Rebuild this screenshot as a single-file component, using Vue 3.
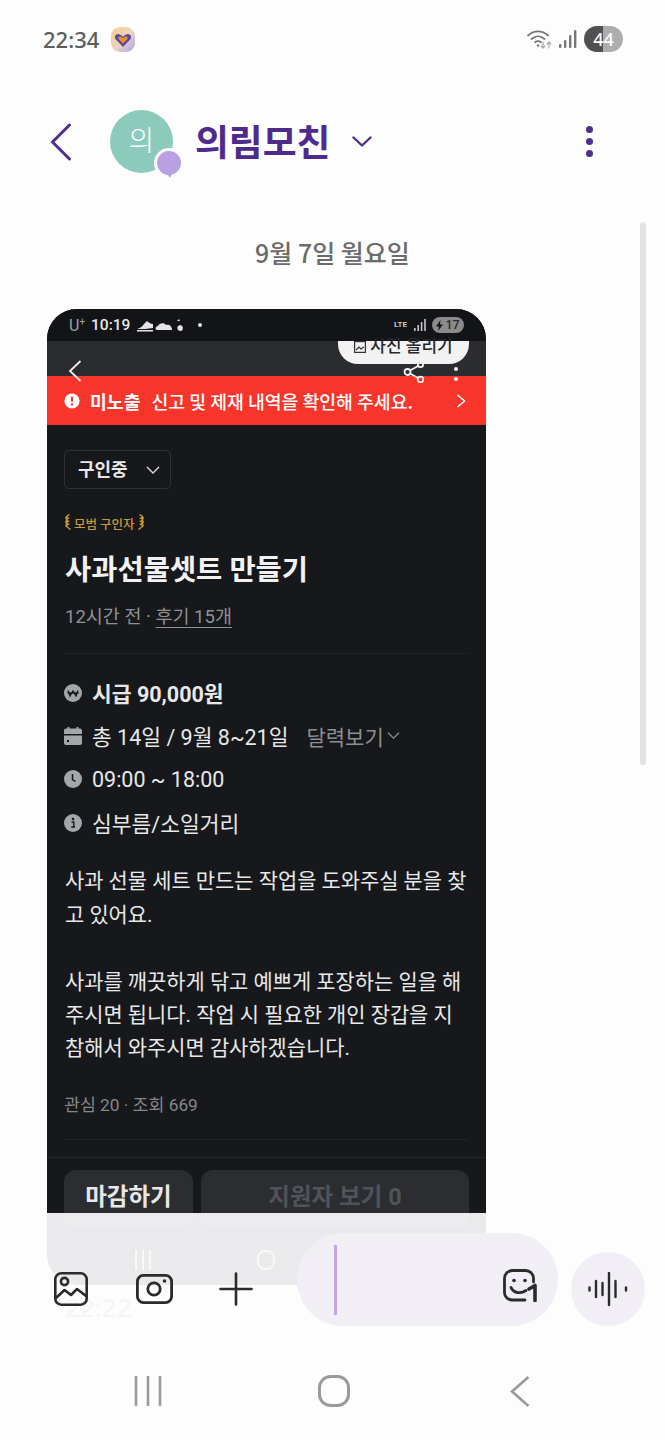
<template>
  <div class="phone">
    <div class="status">
      <span class="clock">22:34</span>
      <svg class="app-badge" width="24" height="25" viewBox="0 0 24 25">
        <defs>
          <linearGradient id="badgeGrad" x1="0" y1="0" x2="1" y2="1">
            <stop offset="0" stop-color="#f8cf85" />
            <stop offset="0.55" stop-color="#e9d3c4" />
            <stop offset="1" stop-color="#a99cf0" />
          </linearGradient>
        </defs>
        <rect width="24" height="25" rx="9" fill="url(#badgeGrad)" />
        <path d="M12 20 4.8 12.6C2.6 9.8 5 6.4 8 7.2c1.800.4 3 1.500 4 2.800 1-1.300 2.200-2.400 4-2.800 3-.8 5.400 2.600 3.200 5.400Z" fill="#5a4a9a" />
        <path d="M12 16.500 7.800 12.200c-1.200-1.500.2-3 1.700-2.600 1 .3 1.800 1.100 2.500 2 .7-.9 1.500-1.700 2.500-2 1.500-.4 2.900 1.100 1.700 2.600Z" fill="#f0902c" />
      </svg>
      <div class="status-right">
        <svg width="26" height="20" viewBox="0 0 26 20" fill="none" stroke="#777" stroke-linecap="round">
          <path d="M1 6.500C7 1 15 1 21 6.500" stroke-width="1.800" />
          <path d="M4.500 10c4-3.500 9-3.500 13 0" stroke-width="1.800" />
          <path d="M8 13.300c2-1.600 4-1.600 6 0" stroke-width="1.800" />
          <circle cx="11" cy="16.500" r="1.200" fill="#777" stroke="none" />
          <path d="M16 13v6M14.300 17l1.700 2 1.700-2" stroke="#aaa" stroke-width="1.200" />
          <path d="M22 19v-6M20.300 15l1.700-2 1.700 2" stroke="#aaa" stroke-width="1.200" />
        </svg>
        <svg class="signal" width="18" height="18" viewBox="0 0 18 18" fill="#777">
          <rect x="0" y="14" width="2.400" height="4" rx="1" />
          <rect x="5" y="10" width="2.400" height="8" rx="1" />
          <rect x="10" y="5" width="2.400" height="13" rx="1" />
          <rect x="15" y="0" width="2.400" height="18" rx="1" />
        </svg>
        <div class="battery"><span>44</span></div>
      </div>
    </div>

    <header class="header">
      <svg class="back" width="22" height="38" viewBox="0 0 22 38" fill="none" stroke="#4f2d8a" stroke-width="3" stroke-linecap="round" stroke-linejoin="round">
        <path d="M19.500 2 2.500 19l17 17" />
      </svg>
      <div class="avatar">
        <span>의</span>
        <svg class="avatar-tag" width="30" height="34" viewBox="0 0 30 34">
          <path d="M15 1.500C7.500 1.500 1.500 7.500 1.500 15c0 7 5 12.500 11.500 13.400L16 33l2.500-5C24 26.500 28.500 21.500 28.500 15 28.500 7.500 22.500 1.500 15 1.500Z" fill="#b9a0e2" stroke="#fdfdfe" stroke-width="3" />
        </svg>
      </div>
      <h1 class="room">의림모친</h1>
      <svg class="room-caret" width="20" height="11" viewBox="0 0 20 11" fill="none" stroke="#4f2d8a" stroke-width="2.400" stroke-linecap="round" stroke-linejoin="round">
        <path d="M1.500 1.500 10 9.500l8.500-8" />
      </svg>
      <div class="kebab"><i></i><i></i><i></i></div>
    </header>

    <div class="date">9월 7일 월요일</div>

    <main class="thread">
      <article class="shot">
        <div class="shot-status">
          <span class="carrier">U<sup>+</sup></span>
          <b>10:19</b>
          <svg width="46" height="14" viewBox="0 0 46 14" fill="#e6e6e6">
            <path d="M0 11c3-1 5-2 7-5l3-3c2 2 4 3 6 3v4c-5 1-10 1-16 1Z" />
            <rect y="12" width="16" height="1.500" />
            <path d="M20 12c-2 0-2-4 1-4 1-3 6-4 8-1 3-1 6 1 6 5Z" />
            <path d="M43 3h-3l2-2M44 13c-3 0-4-2-3.500-4 .5-2 4-2.500 5-.5s-.5 4.500-1.500 4.500Z" />
          </svg>
          <i class="shot-dot"></i>
          <div class="shot-status-right">
            <span class="lte">LTE</span>
            <svg width="12" height="12" viewBox="0 0 12 12" fill="#c8c8c8">
              <rect x="0" y="9" width="1.600" height="3" />
              <rect x="3.400" y="6" width="1.600" height="6" />
              <rect x="6.800" y="3" width="1.600" height="9" />
              <rect x="10.200" y="0" width="1.600" height="12" />
            </svg>
            <div class="shot-battery"><svg width="7" height="11" viewBox="0 0 7 11" fill="#15161a"><path d="M4.500 0 0 6.500h3L2 11l5-6.500H4Z" /></svg>17</div>
          </div>
        </div>

        <div class="shot-topbar">
          <svg class="shot-back" width="14" height="22" viewBox="0 0 14 22" fill="none" stroke="#eee" stroke-width="1.800">
            <path d="M12.500 1 2 11l10.500 10" />
          </svg>
          <div class="upload">
            <svg width="12" height="12" viewBox="0 0 12 12" fill="none" stroke="#333" stroke-width="1.200"><rect x=".6" y=".6" width="10.800" height="10.800" /><path d="m2 9 3-3 2 2 3-2" /></svg>
            사진 올리기
          </div>
          <svg class="shot-share" width="22" height="22" viewBox="0 0 22 22" fill="none" stroke="#f2f2f2" stroke-width="1.800">
            <circle cx="4.500" cy="11" r="3" />
            <circle cx="17.500" cy="3.500" r="2.600" />
            <circle cx="17.500" cy="18.500" r="2.800" />
            <path d="m7 9.500 8-4.500M7 12.500l8 4.500" />
          </svg>
          <div class="shot-kebab"><i></i><i></i></div>
        </div>

        <div class="notice">
          <svg width="16" height="16" viewBox="0 0 16 16">
            <circle cx="8" cy="8" r="7.600" fill="#fff" />
            <rect x="7" y="3.500" width="2" height="5.600" rx="1" fill="#f8352a" />
            <circle cx="8" cy="11.400" r="1.200" fill="#f8352a" />
          </svg>
          <b>미노출</b>
          <span>신고 및 제재 내역을 확인해 주세요.</span>
          <svg class="notice-go" width="10" height="14" viewBox="0 0 10 14" fill="none" stroke="#fff" stroke-width="1.500">
            <path d="m1.500 1 7 6-7 6" />
          </svg>
        </div>

        <div class="shot-body">
          <div class="state">
            <span>구인중</span>
            <svg width="14" height="8" viewBox="0 0 14 8" fill="none" stroke="#ddd" stroke-width="1.400"><path d="m1 1 6 6 6-6" /></svg>
          </div>

          <div class="medal">
            <svg width="8" height="18" viewBox="0 0 8 18" fill="#c79a3a"><path d="M6 1 3 3l3 1-3 2 3 1-3 2 3 1-3 2 4 3-1 1-5-4 1-2-1-2 1-2-1-2 1-2 3-2Z" /></svg>
            <span>모범 구인자</span>
            <svg width="8" height="18" viewBox="0 0 8 18" fill="#c79a3a"><path d="M2 1l3 2-3 1 3 2-3 1 3 2-3 1 3 2-4 3 1 1 5-4-1-2 1-2-1-2 1-2-1-2-3-2Z" /></svg>
          </div>

          <h2 class="job">사과선물셋트 만들기</h2>
          <p class="meta">12시간 전 · <u>후기 15개</u></p>
          <hr class="rule rule-a" />

          <ul class="facts">
            <li class="strong">
              <svg width="18" height="18" viewBox="0 0 18 18">
                <circle cx="9" cy="9" r="9" fill="#a5a6a8" />
                <path d="m4 6.500 2 5.500 3-5 3 5 2-5.500M3.500 9h11" fill="none" stroke="#15171a" stroke-width="1.400" />
              </svg>
              시급 90,000원
            </li>
            <li>
              <svg width="18" height="18" viewBox="0 0 18 18" fill="#a5a6a8">
                <rect x="3.500" y="0" width="2" height="3" />
                <rect x="12.500" y="0" width="2" height="3" />
                <path d="M0 3.500a2 2 0 0 1 2-2h14a2 2 0 0 1 2 2V7H0ZM0 8.500h18V16a2 2 0 0 1-2 2H2a2 2 0 0 1-2-2Z" />
                <rect x="3" y="13" width="2" height="2" fill="#15171a" />
              </svg>
              총 14일 / 9월 8~21일
              <span class="calendar">달력보기<svg width="13" height="7" viewBox="0 0 13 7" fill="none" stroke="#8d8f92" stroke-width="1.200"><path d="m1 .8 5.500 5.400L12 .8" /></svg></span>
            </li>
            <li>
              <svg width="18" height="18" viewBox="0 0 18 18">
                <circle cx="9" cy="9" r="9" fill="#a5a6a8" />
                <path d="M8.500 4v5.500l3 2" fill="none" stroke="#15171a" stroke-width="1.500" />
              </svg>
              09:00 ~ 18:00
            </li>
            <li>
              <svg width="18" height="18" viewBox="0 0 18 18">
                <circle cx="9" cy="9" r="9" fill="#a5a6a8" />
                <circle cx="9" cy="5" r="1.300" fill="#15171a" />
                <path d="M7.500 8h2.300v5h1.200M7.200 13h3.800" fill="none" stroke="#15171a" stroke-width="1.400" />
              </svg>
              심부름/소일거리
            </li>
          </ul>

          <p class="desc">사과 선물 세트 만드는 작업을 도와주실 분을 찾<br />고 있어요.<br /><br />사과를 깨끗하게 닦고 예쁘게 포장하는 일을 해<br />주시면 됩니다. 작업 시 필요한 개인 장갑을 지<br />참해서 와주시면 감사하겠습니다.</p>
          <p class="counts">관심 20 · 조회 669</p>
          <hr class="rule rule-b" />
        </div>

        <div class="shot-actions">
          <button class="close">마감하기</button>
          <button class="applicants">지원자 보기 0</button>
        </div>

        <div class="shot-nav">
          <svg width="18" height="20" viewBox="0 0 18 20" fill="#b8b8b8"><rect x="1" width="2" height="20" /><rect x="8" width="2" height="20" /><rect x="15" width="2" height="20" /></svg>
          <svg width="18" height="20" viewBox="0 0 18 20" fill="none" stroke="#b8b8b8" stroke-width="2"><rect x="1" y="1" width="16" height="18" rx="7" /></svg>
        </div>
      </article>
      <time class="sent">22:22</time>
    </main>

    <div class="scrollbar"></div>

    <footer class="composer">
      <div class="compose-row">
        <div class="tools">
          <svg width="34" height="34" viewBox="0 0 34 34" fill="none" stroke="#2b2b2b" stroke-width="2.600" stroke-linejoin="round" stroke-linecap="round">
            <rect x="1.300" y="1.300" width="31.400" height="31.400" rx="6" />
            <circle cx="10.500" cy="9.500" r="3.600" />
            <path d="m2 26 8.500-8 6.500 5 6-6 9 7" />
          </svg>
          <svg class="camera" width="37" height="30" viewBox="0 0 37 30" fill="none" stroke="#2b2b2b" stroke-width="2.800">
            <rect x="1.400" y="1.400" width="34.200" height="27.200" rx="6" />
            <circle cx="18" cy="15" r="6.200" />
            <circle cx="28.500" cy="7" r="1.800" fill="#2b2b2b" stroke="none" />
          </svg>
          <svg class="plus" width="34" height="34" viewBox="0 0 34 34" fill="none" stroke="#2b2b2b" stroke-width="2.600" stroke-linecap="round">
            <path d="M17 1.500v31M1.500 17h31" />
          </svg>
        </div>
        <div class="input">
          <i class="caret"></i>
          <svg width="35" height="33" viewBox="0 0 35 33" fill="none" stroke="#2b2b2b" stroke-width="2.800" stroke-linecap="round" stroke-linejoin="round">
            <path d="M22 31H9a7.500 7.500 0 0 1-7.500-7.500v-14A8 8 0 0 1 9.500 1.500h13A8 8 0 0 1 30.500 9.500V13" />
            <circle cx="11" cy="11.500" r="1.800" fill="#2b2b2b" stroke="none" />
            <circle cx="22" cy="11.500" r="1.800" fill="#2b2b2b" stroke="none" />
            <path d="M8 18.500c3 6 10 6.500 15 3" />
            <path d="M26 20l6-3.500V31.500" stroke-width="3.600" />
          </svg>
        </div>
        <div class="voice">
          <svg width="40" height="34" viewBox="0 0 40 34" fill="none" stroke="#2b2b2b" stroke-width="2.400" stroke-linecap="round">
            <path v-for="b in waveBars" :key="b.x" :d="`M${b.x} ${17 - b.h / 2}v${b.h}`" />
          </svg>
        </div>
      </div>
      <nav class="softkeys">
        <svg width="28" height="30" viewBox="0 0 28 30" fill="none" stroke="#9a9a9a" stroke-width="2.600">
          <path d="M2 0v30M14 0v30M26 0v30" />
        </svg>
        <svg width="32" height="32" viewBox="0 0 32 32" fill="none" stroke="#9a9a9a" stroke-width="3">
          <rect x="1.500" y="1.500" width="29" height="29" rx="11" />
        </svg>
        <svg width="20" height="31" viewBox="0 0 20 31" fill="none" stroke="#9a9a9a" stroke-width="2.600">
          <path d="M18.500 1 2 15.500 18.500 30" />
        </svg>
      </nav>
    </footer>
  </div>
</template>

<script setup>
const waveBars = [
  { x: 1.500, h: 3 },
  { x: 8, h: 16 },
  { x: 14.500, h: 12 },
  { x: 21, h: 32 },
  { x: 27.500, h: 16 },
  { x: 38, h: 3 },
]
</script>

<style>
html,
body {
  margin: 0;
  background: #fdfdfe;
}
</style>

<style scoped>
.phone {
  position: relative;
  width: 665px;
  height: 1440px;
  overflow: hidden;
  background: #fdfdfe;
  font-family: "Noto Sans CJK KR", "Noto Sans", sans-serif;
}
.status {
  height: 78px;
  box-sizing: border-box;
  padding: 0 42px 0 43px;
  display: flex;
  align-items: center;
}
.clock {
  font-family: "Noto Sans", sans-serif;
  font-weight: 500;
  font-size: 22px;
  color: #5c5c5c;
  width: 68px;
}
.status-right {
  margin-left: auto;
  display: flex;
  align-items: center;
}
.signal {
  margin-left: 6px;
}
.battery {
  margin-left: 7px;
  width: 39px;
  height: 26px;
  border-radius: 13px;
  background: linear-gradient(90deg, #505050 50%, #adadad 50%);
  color: #fff;
  font: 500 18px/26px "Noto Sans", sans-serif;
  text-align: center;
}
.header {
  height: 127px;
  display: flex;
  align-items: center;
  padding-left: 50px;
}
.avatar {
  position: relative;
  margin-left: 38px;
  width: 63px;
  height: 63px;
  border-radius: 50%;
  background: #8ccbbb;
  color: #fff;
  font-size: 28px;
  font-weight: 300;
  line-height: 58px;
  text-align: center;
}
.avatar-tag {
  position: absolute;
  left: 44px;
  top: 38px;
}
.room {
  margin: 0 0 4px 22px;
  font-size: 36.800px;
  line-height: 44px;
  font-weight: 700;
  color: #4d2a8c;
}
.room-caret {
  margin-left: 22px;
}
.kebab {
  margin-left: auto;
  margin-right: 72px;
  display: flex;
  flex-direction: column;
  gap: 5px;
}
.kebab i {
  width: 7px;
  height: 7px;
  border-radius: 50%;
  background: #4f2d8a;
}
.date {
  height: 94px;
  line-height: 94px;
  text-align: center;
  font-size: 25px;
  font-weight: 500;
  color: #6b6b6b;
}
.thread {
  padding: 10px 0 0 47px;
}
.shot {
  width: 439px;
  height: 976px;
  overflow: hidden;
  border-radius: 30px;
  background: #16181b;
  color: #e8e8e8;
  font-family: Roboto, "Noto Sans CJK KR", sans-serif;
}
.shot-status {
  height: 32px;
  background: #131417;
  display: flex;
  align-items: center;
  padding: 0 22px;
  font-size: 15.500px;
}
.carrier {
  color: #a0a0a0;
  font-size: 16px;
  margin-right: 6px;
}
.carrier sup {
  font-size: 10px;
  line-height: 0;
}
.shot-status b {
  font-weight: 500;
  margin-right: 7px;
}
.shot-dot {
  width: 4px;
  height: 4px;
  border-radius: 50%;
  background: #e6e6e6;
  margin-left: 15px;
}
.shot-status-right {
  margin-left: auto;
  display: flex;
  align-items: center;
  gap: 5px;
}
.lte {
  width: 15px;
  color: #c8c8c8;
  font-size: 8px;
  font-weight: 700;
  line-height: 16px;
}
.shot-battery {
  margin-left: 1px;
  width: 32px;
  height: 16px;
  border-radius: 8px;
  background: #8b8b8b;
  color: #2a2a2a;
  font-size: 12.500px;
  font-weight: 500;
  line-height: 16px;
  display: flex;
  align-items: center;
  justify-content: center;
  gap: 2px;
}
.shot-topbar {
  position: relative;
  z-index: 1;
  height: 35px;
  background: #2a2c30;
}
.shot-back {
  position: absolute;
  left: 21px;
  top: 19px;
}
.upload {
  position: absolute;
  left: 291px;
  top: 0;
  width: 131px;
  height: 23px;
  border-radius: 0 0 20px 20px;
  background: #f2f2f3;
  color: #26272a;
  font-size: 17px;
  font-weight: 500;
  line-height: 10px;
  display: flex;
  justify-content: center;
  gap: 4px;
}
.shot-share {
  position: absolute;
  left: 356px;
  top: 20px;
}
.shot-kebab {
  position: absolute;
  left: 407px;
  top: 26px;
  display: flex;
  flex-direction: column;
  gap: 6px;
}
.shot-kebab i {
  width: 4px;
  height: 4px;
  border-radius: 50%;
  background: #f2f2f2;
}
.notice {
  height: 49px;
  background: #f8352a;
  color: #fff;
  display: flex;
  align-items: center;
  padding: 0 20px 0 17px;
  font-size: 18.300px;
  font-family: "Noto Sans CJK KR", sans-serif;
  position: relative;
}
.notice b {
  margin: 0 11px 0 10px;
  font-weight: 700;
}
.notice span {
  font-weight: 500;
}
.notice-go {
  margin-left: auto;
}
.shot-body {
  padding: 25px 17px 0;
}
.state {
  box-sizing: border-box;
  width: 107px;
  height: 39px;
  border: 1px solid #2f3135;
  border-radius: 5px;
  padding: 0 10px 0 13px;
  display: flex;
  align-items: center;
  justify-content: space-between;
  font-size: 18px;
  font-weight: 700;
  font-family: "Noto Sans CJK KR", sans-serif;
}
.state span {
  margin-bottom: 3px;
}
.medal {
  margin-top: 24px;
  height: 20px;
  display: flex;
  align-items: center;
  gap: 2px;
  color: #c79a3a;
  font-size: 12.500px;
  font-weight: 500;
}
.job {
  margin: 20px 0 0 1px;
  font-size: 28.500px;
  line-height: 36px;
  font-weight: 700;
  color: #f2f2f2;
}
.meta {
  margin: 16px 0 0 1px;
  font-size: 18.500px;
  line-height: 24px;
  color: #8f9194;
}
.meta u {
  text-underline-offset: 4px;
}
.rule {
  height: 1px;
  border: 0;
  background: #212327;
  margin: 0;
}
.rule-a {
  margin-top: 24px;
}
.rule-b {
  margin-top: 22px;
}
.facts {
  list-style: none;
  margin: 17px 0 0;
  padding: 0;
  font-size: 21.500px;
}
.facts li {
  height: 43.330px;
  display: flex;
  align-items: center;
  gap: 10px;
}
.facts .strong {
  font-weight: 700;
}
.calendar {
  margin-left: 8px;
  color: #8d8f92;
  font-size: 21px;
  display: flex;
  align-items: center;
  gap: 3px;
}
.desc {
  margin: 21px 0 0 1px;
  font-size: 20.900px;
  line-height: 33.400px;
  white-space: nowrap;
}
.counts {
  margin: 27px 0 0;
  font-size: 17.300px;
  line-height: 24px;
  color: #85878a;
}
.shot-actions {
  margin-top: 17px;
  border-top: 1px solid #26282b;
  padding: 12px 17px 0;
  display: flex;
  gap: 8px;
}
.shot-actions button {
  height: 58px;
  border: 0;
  border-radius: 12px;
  background: #2b2d31;
  font-family: Roboto, "Noto Sans CJK KR", sans-serif;
  font-size: 23.500px;
  font-weight: 700;
  padding: 0 0 8px;
}
.close {
  width: 129px;
  color: #e8e8e8;
}
.applicants {
  width: 268px;
  color: #50535a;
}
.shot-nav {
  margin-top: 12px;
  height: 40px;
  display: flex;
  align-items: center;
  padding-left: 87px;
  gap: 105px;
}
.sent {
  display: block;
  margin: 10px 0 0 18px;
  font: 500 26px/24px "Noto Sans", sans-serif;
  color: #999;
}
.scrollbar {
  position: absolute;
  left: 640px;
  top: 222px;
  width: 6px;
  height: 543px;
  border-radius: 3px;
  background: #e3e3e3;
}
.composer {
  position: absolute;
  left: 0;
  top: 1213px;
  width: 665px;
  height: 227px;
  background: rgba(253, 253, 254, 0.92);
}
.compose-row {
  padding: 20px 0 0 54px;
  display: flex;
  align-items: flex-end;
}
.tools {
  display: flex;
  align-items: center;
  margin-bottom: 20px;
}
.camera {
  margin-left: 48px;
}
.plus {
  margin-left: 46px;
}
.input {
  margin-left: 44px;
  box-sizing: border-box;
  width: 261px;
  height: 93px;
  border-radius: 46px;
  background: #f1eff5;
  padding: 0 20px 0 37px;
  display: flex;
  align-items: center;
  justify-content: space-between;
}
.input svg {
  margin-top: 11px;
}
.caret {
  width: 3px;
  height: 70px;
  background: #c2a6e4;
}
.voice {
  margin-left: 13px;
  width: 74px;
  height: 74px;
  border-radius: 50%;
  background: #f1eff5;
  display: flex;
  align-items: center;
  justify-content: center;
}
.softkeys {
  margin-top: 49px;
  padding-left: 55px;
  display: grid;
  grid-template-columns: repeat(3, 186px);
  place-items: center;
}
</style>
